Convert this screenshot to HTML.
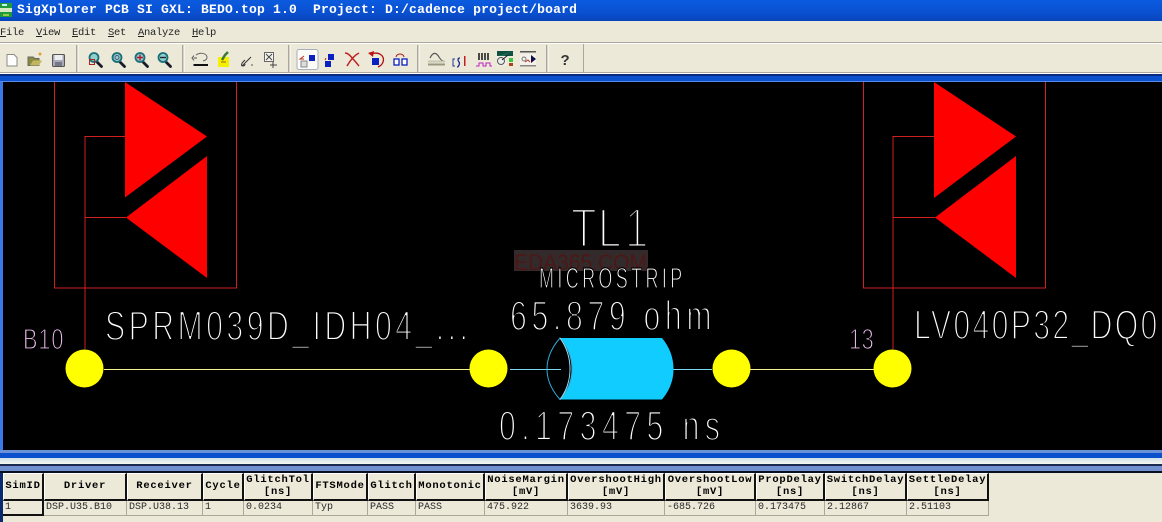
<!DOCTYPE html>
<html><head><meta charset="utf-8">
<style>
html,body{margin:0;padding:0;background:#ece9d8;}
#p{position:relative;width:1162px;height:522px;overflow:hidden;background:#ece9d8;}
#p>*{position:absolute;}
.title{left:0;top:0;width:1162px;height:21px;background:linear-gradient(#0b5be0,#0a50d0 60%,#0845bb);}
.tt{left:17px;top:1px;font:bold 13px/17px "Liberation Mono",monospace;letter-spacing:.2px;color:#fff;white-space:pre;}
.m{top:26px;font:10.5px/14px "Liberation Mono",monospace;letter-spacing:-.3px;color:#222;white-space:pre;}
.m u{text-underline-offset:1px;}
.c{box-sizing:border-box;text-align:center;overflow:hidden;white-space:pre;}
.h{top:473px;height:28px;background:#ece9d8;border-top:1px solid #fff;border-left:1px solid #fff;border-right:2px solid #111;border-bottom:2px solid #111;font:bold 10.5px/11.5px "Liberation Mono",monospace;letter-spacing:.75px;color:#000;display:flex;align-items:center;justify-content:center;}
.d{top:501px;height:15px;background:#ece9d8;border-right:1px solid #aca899;border-bottom:1px solid #aca899;text-align:left;padding-left:2px;font:10px/14px "Liberation Mono",monospace;color:#2a2a2a;}
</style></head><body>
<div id="p">
<div class="title"></div>
<svg style="left:0;top:3px" width="13" height="14"><rect width="12" height="14" fill="#1f9b3c"/><rect x="0" y="5" width="12" height="4" fill="#d8e8c0"/><rect x="2" y="1" width="5" height="2" fill="#cfe"/><rect x="3" y="11" width="6" height="2" fill="#9c4"/></svg>
<div class="tt">SigXplorer PCB SI GXL: BEDO.top 1.0  Project: D:/cadence project/board</div>

<div class="m" style="left:0"><u>F</u>ile</div>
<div class="m" style="left:36px"><u>V</u>iew</div>
<div class="m" style="left:72px"><u>E</u>dit</div>
<div class="m" style="left:108px"><u>S</u>et</div>
<div class="m" style="left:138px"><u>A</u>nalyze</div>
<div class="m" style="left:192px"><u>H</u>elp</div>

<svg style="left:0;top:40px" width="1162" height="36" viewBox="0 40 1162 36">
 <rect x="0" y="42" width="1162" height="1" fill="#aca899"/><rect x="0" y="43" width="1162" height="1" fill="#fff"/>
 <rect x="0" y="72" width="1162" height="1" fill="#aca899"/><rect x="0" y="73" width="1162" height="1" fill="#fff"/>
 <g fill="#aca899"><rect x="76" y="45" width="1.5" height="27"/><rect x="182" y="45" width="1.5" height="27"/><rect x="288" y="45" width="1.5" height="27"/><rect x="417" y="45" width="1.5" height="27"/><rect x="546" y="45" width="1.5" height="27"/><rect x="583" y="44" width="1" height="28"/></g>
 <g fill="#fff"><rect x="77.5" y="45" width="1" height="27"/><rect x="183.500" y="45" width="1" height="27"/><rect x="289.500" y="45" width="1" height="27"/><rect x="418.500" y="45" width="1" height="27"/><rect x="547.500" y="45" width="1" height="27"/></g>
 <!-- file icons -->
 <path d="M7 54.500h7l3 3v8.500H7z" fill="#fff" stroke="#8a8a80"/>
 <path d="M28 57h5l2 1.500h4v7H28z" fill="#8a8a40" stroke="#666"/><path d="M30 65.500l3-5h9l-3 5z" fill="#c2b760"/><circle cx="40" cy="54" r="1.500" fill="#e0a040"/>
 <rect x="52.500" y="54.500" width="12" height="12" rx="1" fill="#aab" stroke="#555"/><rect x="54.500" y="55" width="8" height="5" fill="#eee"/><rect x="55" y="62" width="7" height="4" fill="#778"/>
 <!-- zooms -->
 <g stroke="#1a1a2a" stroke-width="2.800" fill="none" stroke-linecap="round"><path d="M97 62l4.500 4.500"/><path d="M120 62l4.500 4.500"/><path d="M143 62l4.500 4.500"/><path d="M166 62l4.500 4.500"/></g>
 <g fill="#8fd0cc" stroke="#1a6f78" stroke-width="1.800"><circle cx="94" cy="57.500" r="4.500"/><circle cx="117" cy="57.500" r="4.500"/><circle cx="140" cy="57.500" r="4.500"/><circle cx="163" cy="57.500" r="4.500"/></g>
 <rect x="89.500" y="59.500" width="5" height="5" fill="none" stroke="#b02020"/>
 <path d="M137 57.500h6M140 54.500v6" stroke="#c01030" stroke-width="1.400"/>
 <path d="M160 57.500h6" stroke="#223" stroke-width="1.400"/>
 <circle cx="117" cy="57.500" r="2" fill="none" stroke="#557"/>
 <!-- edit icons -->
 <path d="M197 58h-3.500M194 55.500l-2 2.500 2 2.500" stroke="#555" fill="none"/><path d="M196 55c4-3 11-2 11 2.500 0 2-2 3-4 3.500" fill="none" stroke="#666"/>
 <rect x="193.500" y="64" width="14.500" height="2" fill="#111"/>
 <rect x="218" y="57" width="11" height="10" fill="#f5f000"/><path d="M222 60l3-5 3-3" stroke="#3c7a30" stroke-width="2.500" fill="none"/><path d="M221 62h5" stroke="#a06020"/>
 <path d="M242 66l9-9M245 60l-2 2c-2 2-2 4 0 4 2 0 2-2 2-2" stroke="#333" fill="none"/><circle cx="252" cy="65" r="1" fill="#888"/>
 <rect x="264.500" y="52.500" width="9" height="9" fill="#f5f5f0" stroke="#666"/><path d="M266 54l6 6M272 54l-6 6M270 65h7M273 62v6" stroke="#444"/>
 <!-- pressed button -->
 <rect x="297" y="49.500" width="21" height="20" rx="2" fill="#fbfbf8" stroke="#a8b0c0"/>
 <g fill="#0a20c0"><rect x="309" y="55" width="6" height="6"/><rect x="328" y="54" width="6" height="6" /><rect x="326" y="62" width="6" height="6" transform="translate(-1,-1)"/><rect x="372" y="58" width="7" height="7" /><rect x="394" y="59" width="5" height="6"/><rect x="402" y="59" width="5" height="6"/></g>
 <path d="M304 56l-4 3h4" fill="none" stroke="#c03020"/><rect x="301" y="61" width="6" height="6" fill="#ddd" stroke="#888"/>
 <path d="M326 58l-1 2" stroke="#c03020"/>
 <path d="M345 53c4 0 6 4 8 6 3 3 5 6 6 7M359 53c-4 2-8 6-12 13" fill="none" stroke="#c02020" stroke-width="1.500"/>
 <path d="M371 54c8-3 14 2 12 8-1 3-3 4-5 5" fill="none" stroke="#b01010" stroke-width="1.300"/><path d="M368 53l6-2-1 6z" fill="#c01010"/>
 <rect x="394" y="59" width="5" height="6" fill="#fff" stroke="#0a20c0" stroke-width="1.300"/><rect x="402" y="59" width="5" height="6" fill="#fff" stroke="#0a20c0" stroke-width="1.300"/>
 <path d="M396 57c1-4 7-4 8 0" fill="none" stroke="#b01010"/>
 <!-- analysis icons -->
 <path d="M430 58c3-6 6-6 9-1s5 4 6 4" fill="none" stroke="#555" stroke-width="1.200"/><rect x="428" y="60.500" width="17" height="2" fill="#c8c8b0"/><rect x="428" y="63.500" width="17" height="2" fill="#999980"/>
 <path d="M455 59h-2v7h2" fill="none" stroke="#223a90"/><path d="M460 58c-3 0-2 3-1 4s0 5-2 5" fill="none" stroke="#1a2a90" stroke-width="1.300"/><rect x="464" y="56" width="1.500" height="10" fill="#c02020"/>
 <path d="M479 53v7M482 53v7M485 53v7M488 53v7" stroke="#222" stroke-width="1.600"/><path d="M476 66h3v-3h4v3h3v-3h4v3h2" fill="none" stroke="#c020c0"/>
 <rect x="497" y="51" width="16" height="5" fill="#105040"/><path d="M497 56h7l9-5" fill="#1a6a50"/><rect x="497" y="56" width="9" height="10" fill="#f0f0e8"/><circle cx="501" cy="61" r="3.500" fill="#eee" stroke="#555"/><path d="M502 60l6-5" stroke="#222"/><rect x="509" y="58" width="4" height="4" fill="#40c040"/><rect x="509" y="63" width="4" height="3" fill="#b04020"/>
 <rect x="520" y="51" width="16" height="1.500" fill="#555"/><rect x="520" y="54" width="16" height="12" fill="#f4f2ea"/><rect x="520" y="65" width="16" height="1.500" fill="#888"/><circle cx="524" cy="59" r="2" fill="none" stroke="#777"/><path d="M525 62l3-2 2 2" stroke="#c03030" fill="none"/><path d="M531 55v8l5-4z" fill="#101040"/>
 <text x="560.500" y="65" style="font:bold 15px 'Liberation Sans',sans-serif" fill="#333">?</text>
</svg>

<!-- blue frame strips -->
<div style="left:0;top:74px;width:1162px;height:2px;background:#0a2a80"></div>
<div style="left:0;top:76px;width:1162px;height:5px;background:#0a50cc"></div>
<div style="left:0;top:81px;width:1162px;height:1px;background:#5a8ae8"></div>
<div style="left:0;top:82px;width:3px;height:370px;background:#3c78e8"></div>

<svg style="left:3px;top:82px" width="1159" height="370" viewBox="3 82 1159 370">
 <rect x="3" y="82" width="1159" height="370" fill="#000"/>
 <!-- left symbol -->
 <path d="M54.500 82V288H236.500V82M85 349V136.500H125M85 217.500H126" fill="none" stroke="#d02020" stroke-width="1"/>
 <path d="M125 82L207 136.500 125 197.500Z M207 156V278L126 217.500Z" fill="#ff0000"/>
 <!-- right symbol -->
 <path d="M863.500 82V288H1045.500V82M893 349V136.500H934M893 217.500H935" fill="none" stroke="#d02020" stroke-width="1"/>
 <path d="M934 82L1016 136.500 934 198Z M1016 156V278L935 217.500Z" fill="#ff0000"/>
 <!-- wires -->
 <path d="M104 369.500H470M750 369.500H874" stroke="#f4f090" stroke-width="1"/>
 <path d="M510 369.500H561M673 369.500H712" stroke="#7ad8f0" stroke-width="1"/>
 <!-- pins -->
 <g fill="#ffff00"><circle cx="84.500" cy="368.500" r="19"/><circle cx="488.500" cy="368.500" r="19"/><circle cx="731.500" cy="368.500" r="19"/><circle cx="892.500" cy="368.500" r="19"/></g>
 <!-- cylinder -->
 <path d="M560 338H662Q673.500 352 673.500 369T662 399.500H560Q572 385 572 369T560 338Z" fill="#10ccff"/>
 <path d="M560 338Q572 352 572 369T560 399.500Q547 385 547 369T560 338Z" fill="#000" stroke="#30a8d8" stroke-width="1"/>
 <path d="M560 338Q570 352 570 369T560 399.500" fill="none" stroke="#9adcf0" stroke-width="1"/>
 <path d="M547 369.500H561" stroke="#7ad8f0"/>
 <!-- watermark -->
 <rect x="514" y="250" width="134" height="21" fill="#332b2b"/>
 <text x="514" y="270" textLength="133" lengthAdjust="spacingAndGlyphs" style="font:22px 'Liberation Sans',sans-serif" fill="#4c1717">EDA365.COM</text>
 <!-- vector text -->
 <g style="font-family:'Liberation Sans',sans-serif" fill="#fff" stroke="#000" stroke-width="2">
  <g transform="translate(571,247) scale(.75,1)" stroke-width="3"><text style="font-size:56px" x="0 36 72">TL1</text></g>
  <g transform="translate(539,288) scale(.62,1)" stroke-width="1.200"><text style="font-size:29px" textLength="231">MICROSTRIP</text></g>
  <g transform="translate(510,330) scale(.72,1)"><text style="font-size:42px" textLength="280">65.879 ohm</text></g>
  <g transform="translate(499,440) scale(.72,1)"><text style="font-size:42px" textLength="307">0.173475 ns</text></g>
  <g transform="translate(105,340) scale(.72,1)"><text style="font-size:42px" textLength="504">SPRM039D_IDH04_...</text></g>
  <g transform="translate(914,339) scale(.72,1)"><text style="font-size:42px" textLength="338">LV040P32_DQ0</text></g>
  <g fill="#f0c0f0" stroke-width="1.200"><g transform="translate(23,349) scale(.75,1)"><text style="font-size:29px" textLength="54">B10</text></g>
  <g transform="translate(849,349) scale(.75,1)"><text style="font-size:29px" textLength="33">13</text></g></g>
 </g>
</svg>

<!-- bottom strips -->
<div style="left:0;top:450px;width:1162px;height:3px;background:#6a90d8"></div>
<div style="left:0;top:453px;width:1162px;height:5px;background:#0a50cc"></div>
<div style="left:0;top:458px;width:1162px;height:6px;background:linear-gradient(#cfe0e8,#f4f6f0)"></div>
<div style="left:0;top:464px;width:1162px;height:2px;background:#1a2a50"></div>
<div style="left:0;top:466px;width:1162px;height:5px;background:#7090d0"></div>
<div style="left:0;top:471px;width:1162px;height:2px;background:#081020"></div>
<div style="left:0;top:473px;width:3px;height:49px;background:#0a2a70"></div>

<!-- table header -->
<div class="c h" style="left:3px;width:41px">SimID</div>
<div class="c h" style="left:44px;width:83px">Driver</div>
<div class="c h" style="left:127px;width:76px">Receiver</div>
<div class="c h" style="left:203px;width:41px">Cycle</div>
<div class="c h" style="left:244px;width:69px">GlitchTol
[ns]</div>
<div class="c h" style="left:313px;width:55px">FTSMode</div>
<div class="c h" style="left:368px;width:48px">Glitch</div>
<div class="c h" style="left:416px;width:69px">Monotonic</div>
<div class="c h" style="left:485px;width:83px">NoiseMargin
[mV]</div>
<div class="c h" style="left:568px;width:97px">OvershootHigh
[mV]</div>
<div class="c h" style="left:665px;width:91px">OvershootLow
[mV]</div>
<div class="c h" style="left:756px;width:69px">PropDelay
[ns]</div>
<div class="c h" style="left:825px;width:82px">SwitchDelay
[ns]</div>
<div class="c h" style="left:907px;width:82px">SettleDelay
[ns]</div>

<!-- table row -->
<div class="c d" style="left:3px;width:41px;border-right:2px solid #111;border-bottom:2px solid #111">1</div>
<div class="c d" style="left:44px;width:83px">DSP.U35.B10</div>
<div class="c d" style="left:127px;width:76px">DSP.U38.13</div>
<div class="c d" style="left:203px;width:41px">1</div>
<div class="c d" style="left:244px;width:69px">0.0234</div>
<div class="c d" style="left:313px;width:55px">Typ</div>
<div class="c d" style="left:368px;width:48px">PASS</div>
<div class="c d" style="left:416px;width:69px">PASS</div>
<div class="c d" style="left:485px;width:83px">475.922</div>
<div class="c d" style="left:568px;width:97px">3639.93</div>
<div class="c d" style="left:665px;width:91px">-685.726</div>
<div class="c d" style="left:756px;width:69px">0.173475</div>
<div class="c d" style="left:825px;width:82px">2.12867</div>
<div class="c d" style="left:907px;width:82px">2.51103</div>
</div>
</body></html>
